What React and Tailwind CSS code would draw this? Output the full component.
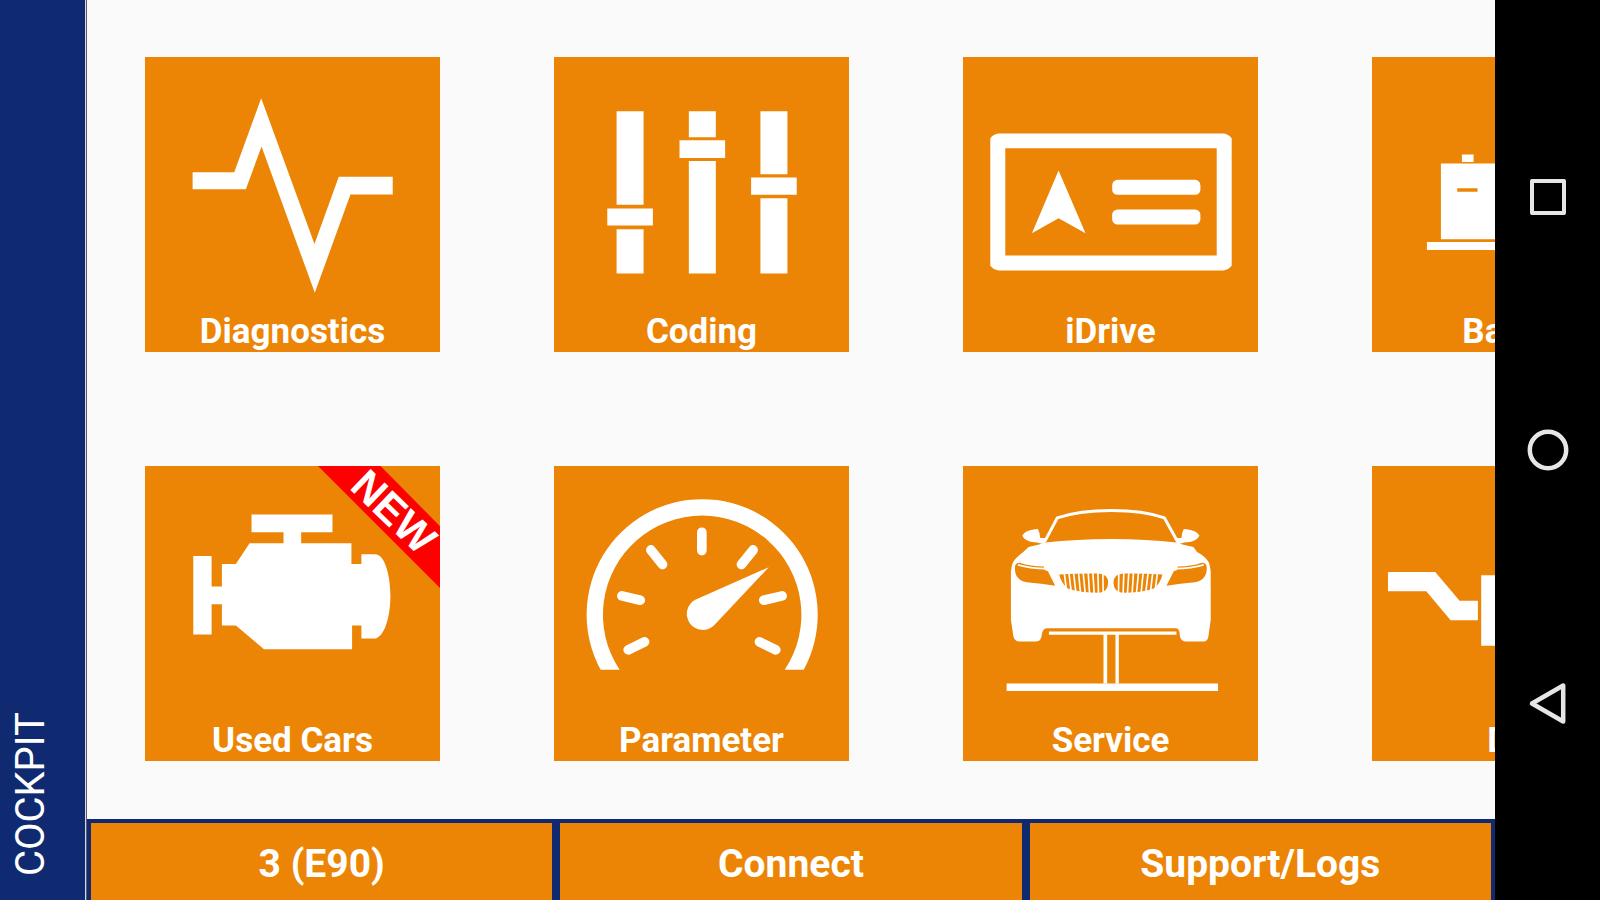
const PulseIcon = () => (
  <path d="M143 346H268L349 124L509 562L582 360H744V413H617L510 708L350 269L303 397H143Z" />
);

const SlidersIcon = () => (
  <>
    <path d="M188 163H269V444H188ZM160 455H297V506H160ZM188 517H269V650H188Z" />
    <path d="M405 163H486V241H405ZM377 250H514V303H377ZM405 312H486V650H405Z" />
    <path d="M620 163H701V352H620ZM592 362H729V414H592ZM620 424H701V650H620Z" />
  </>
);

const DisplayIcon = () => (
  <>
    <path
      fillRule="evenodd"
      d="M106 230H783Q797 232 807 244V627Q797 639 783 641H106Q92 639 82 627V244Q92 232 106 230ZM127 274V596H762V274Z"
    />
    <path d="M287 341L368 529L287 484L207 529Z" />
    <rect x="448" y="369" width="265" height="45" rx="16" />
    <rect x="448" y="458" width="265" height="45" rx="16" />
  </>
);

const BatteryIcon = () => (
  <>
    <path d="M270 293H305V315H270ZM583 293H618V315H583Z" />
    <path d="M207 320H681V547H207Z" />
    <path d="M165 556H723V580H165Z" />
    <path fill="#ec8505" d="M256 394H317V405H256ZM571 394H632V405H571Z" />
  </>
);

const EngineIcon = () => (
  <path d="M145 270H200V362H231V294H273L314 232H416V199H320V146H563V199H469V232H620V294H650V265H693C721 268 737 330 737 390C737 450 721 510 693 518H650V479H622V550H357L273 479H231V415H200V506H145Z" />
);

const GaugeIcon = () => (
  <>
    <path d="M140 612A347 347 0 1 1 750 612H693A298 298 0 1 0 197 612Z" />
    <path
      fill="none"
      stroke="white"
      strokeWidth="29"
      strokeLinecap="round"
      d="M444 199V254M291 252L326 296M598 252L563 296M204 390L259 403M685 390L630 403M223 552L272 528M666 552L617 528"
    />
    <path d="M645 304L481 478A48 48 0 1 1 426 401Z" />
  </>
);

const CarLiftIcon = () => (
  <g transform="translate(-39 -48)">
    <path
      fill="none"
      stroke="white"
      strokeWidth="9"
      d="M284 276L322 204Q390 182 485 182Q580 182 644 204L684 276"
    />
    <path d="M217 257C224 244 240 239 264 237Q270 248 271 264L286 264L284 284L262 278C240 277 224 272 217 257Z" />
    <path d="M749 257C742 244 726 239 702 237Q696 248 695 264L680 264L682 284L704 278C726 277 742 272 749 257Z" />
    <path d="M286 278Q380 267 485 267Q590 267 680 278L698 284L731 291L742 306Q776 324 780 346L783 365V510L776 560Q773 575 762 575H706Q691 573 690 555Q690 538 680 535H290Q278 537 276 553Q275 574 258 575H208Q193 575 190 558L183 510V365L186 346Q190 328 220 306L236 291L268 284Z" />
    <g fill="#ec8505">
      <path d="M195 352Q196 338 212 339Q240 349 282 350L284 360L294 364L316 408Q275 400 230 397Q193 390 195 352Z" />
      <path d="M771 352Q770 338 754 339Q726 349 684 350L682 360L672 364L650 408Q691 400 736 397Q773 390 771 352Z" />
      <path d="M328 374Q380 370 445 371Q475 373 475 398Q474 427 448 429Q390 429 352 415Q333 398 328 374Z" />
      <path d="M638 374Q586 370 521 371Q491 373 491 398Q492 427 518 429Q576 429 614 415Q633 398 638 374Z" />
      <path d="M290 539H680V543H290Z" />
    </g>
    <path
      fill="none"
      stroke="white"
      strokeWidth="5"
      d="M204 345Q240 356 290 356M762 345Q726 356 676 356M343 368L350 422M357 368L364 426M371 368L378 428M386 368L392 430M400 368L406 431M415 368L419 431M429 368L433 431M444 368L446 431M459 368L460 431M623 368L616 422M609 368L602 426M595 368L588 428M580 368L574 430M566 368L560 431M551 368L547 431M537 368L533 431M522 368L520 431M507 368L506 431"
    />
    <path d="M297 545H680V555H507V701H497V555H472V701H461V555H297Z" />
    <path d="M170 701H805V724H170Z" />
  </g>
);

const ExhaustIcon = () => (
  <>
    <path d="M48 318H190L263 405H318V463H236L163 376H48Z" />
    <path d="M328 328H700V540H328Z" />
  </>
);

const tiles = [
  { label: 'Diagnostics', icon: PulseIcon },
  { label: 'Coding', icon: SlidersIcon },
  { label: 'iDrive', icon: DisplayIcon },
  { label: 'Battery', icon: BatteryIcon },
  { label: 'Used Cars', icon: EngineIcon, isNew: true },
  { label: 'Parameter', icon: GaugeIcon },
  { label: 'Service', icon: CarLiftIcon },
  { label: 'DPF', icon: ExhaustIcon },
];

const actions = ['3 (E90)', 'Connect', 'Support/Logs'];

const NewRibbon = () => (
  <svg viewBox="0 0 365 365" className="absolute top-0 right-0 size-[122px]">
    <path fill="#ff0000" d="M0 0H187L365 180V365Z" />
    <text
      transform="translate(91 66) rotate(44)"
      fill="white"
      fontSize="126"
      className="font-['Liberation_Sans'] font-bold"
    >
      NEW
    </text>
  </svg>
);

const Tile = ({ label, icon: Icon, isNew }) => (
  <button className="relative flex size-[295px] flex-col justify-end overflow-hidden bg-[#ec8505] text-center">
    <svg viewBox="0 0 886 886" fill="white" className="absolute inset-0 size-full">
      <Icon />
    </svg>
    {isNew && <NewRibbon />}
    <span className="relative w-full text-[35px] leading-[40px] font-bold text-white">{label}</span>
  </button>
);

const NavBar = () => (
  <nav className="flex w-[105px] shrink-0 flex-col bg-black py-[70px]">
    <button aria-label="Recent apps" className="flex flex-1 items-center justify-center">
      <svg viewBox="0 0 42 42" fill="none" stroke="#e6e6e6" strokeWidth="4" strokeLinejoin="round" className="size-[42px]">
        <rect x="5" y="5" width="32" height="32" />
      </svg>
    </button>
    <button aria-label="Home" className="flex flex-1 items-center justify-center">
      <svg viewBox="0 0 42 42" fill="none" stroke="#e6e6e6" strokeWidth="4.5" className="size-[42px]">
        <circle cx="21" cy="21" r="18.2" />
      </svg>
    </button>
    <button aria-label="Back" className="flex flex-1 items-center justify-center">
      <svg viewBox="0 0 42 42" fill="none" stroke="#e6e6e6" strokeWidth="4.5" strokeLinejoin="round" className="size-[42px]">
        <path d="M5 21.5L36.2 3.5V39.5Z" />
      </svg>
    </button>
  </nav>
);

const App = () => {
  return (
    <div className="flex h-screen overflow-hidden bg-[#fafafa] font-[Roboto,sans-serif]">
      <header className="flex w-[87px] shrink-0 items-end border-r border-[#5f5a6b] bg-[#0f2a71] pb-6 pl-[7px] shadow-[inset_-1px_0_0_#d5d8ea]">
        <h1 className="rotate-180 text-[40px] leading-[48px] text-white [writing-mode:vertical-rl]">COCKPIT</h1>
      </header>

      <div className="flex min-w-0 flex-1 flex-col">
        <main className="min-h-0 flex-1 overflow-hidden px-[58px] py-[57px]">
          <div className="grid w-max grid-cols-4 gap-[114px]">
            {tiles.map((tile) => (
              <Tile key={tile.label} {...tile} />
            ))}
          </div>
        </main>

        <footer className="flex h-[81px] shrink-0">
          {actions.map((action) => (
            <button
              key={action}
              className="flex-1 border-4 border-b-0 border-[#0f2a71] bg-[#ec8505] pt-1 text-[39px] leading-[48px] font-bold text-white"
            >
              {action}
            </button>
          ))}
        </footer>
      </div>

      <NavBar />
    </div>
  );
};

export default App;
